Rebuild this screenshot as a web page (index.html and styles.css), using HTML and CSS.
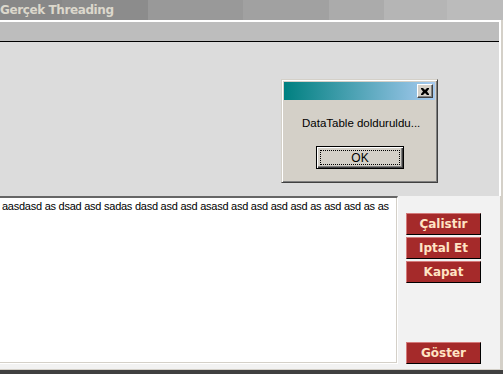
FILE: index.html
```html
<!DOCTYPE html>
<html>
<head>
<meta charset="utf-8">
<link rel="stylesheet" href="styles.css">
</head>
<body>
<div class="window">
  <div class="titlebar"><span class="title">Gerçek Threading</span></div>
  <div class="frame">
    <div class="band"></div>
    <div class="main"></div>
  </div>
  <div class="bottom">
    <div class="bottom-inner">
      <div class="textbox">aasdasd as dsad asd sadas dasd asd asd asasd asd asd asd asd as asd asd as as</div>
      <div class="side">
        <div class="btn">Çalistir</div>
        <div class="btn">Iptal Et</div>
        <div class="btn">Kapat</div>
        <div class="btn btn-last">Göster</div>
      </div>
    </div>
  </div>
  <div class="dialog">
    <div class="dlg-title">
      <div class="dlg-close">
        <svg width="8" height="7" viewBox="0 0 8 7"><path d="M0 0h2l2 2 2-2h2v1L6 3.5 8 6v1H6L4 5 2 7H0V6l2-2.5L0 1z" fill="#000"/></svg>
      </div>
    </div>
    <div class="dlg-msg">DataTable dolduruldu...</div>
    <div class="dlg-ok"><span class="focus">OK</span></div>
  </div>
</div>
</body>
</html>
```
FILE: styles.css
```css
html, body {
  margin: 0;
  padding: 0;
}
body {
  background: #d4d0c8;
  width: 503px;
  height: 374px;
  overflow: hidden;
}
.window {
  position: relative;
  width: 503px;
  height: 374px;
}
.titlebar {
  height: 20px;
  background: linear-gradient(to right,
    #888888 0 62px, #8c8c8c 62px 148px, #999999 148px 243px,
    #a1a1a1 243px 329px, #ababab 329px 384px, #b5b5b5 384px 447px,
    #bbbbbb 447px 503px);
  display: flex;
  align-items: center;
}
.title {
  font-family: "DejaVu Sans", sans-serif;
  font-weight: bold;
  font-size: 12px;
  color: #dcd8cc;
  letter-spacing: -0.4px;
  line-height: 20px;
}
.frame {
  width: 501px;
  box-sizing: border-box;
  border-top: 2px solid #ffffff;
  border-right: 2px solid #ffffff;
}
.band {
  height: 19px;
  background: #bdbdbd;
  border-bottom: 1px solid #000;
}
.main {
  height: 154px;
  background: #dcdcdc;
}
.bottom {
  height: 178px;
  box-sizing: border-box;
  border-bottom: 4px solid #404040;
}
.bottom-inner {
  height: 174px;
  box-sizing: border-box;
  width: 501px;
  border-bottom: 1px solid #d4d0c8;
  border-right: 1px solid #d4d0c8;
  background: #f2f2f2;
  display: flex;
}
.textbox {
  width: 398px;
  height: 168px;
  box-sizing: border-box;
  background: #fff;
  border-top: 2px solid #666666;
  border-right: 1px solid #fff;
  border-bottom: 1px solid #fff;
  box-shadow: inset -1px -1px #d4d0c8;
  padding: 2px 2px;
  font-family: "Liberation Sans", Arial, sans-serif;
  font-size: 11px;
  letter-spacing: -0.25px;
  line-height: 13px;
  color: #000;
  white-space: nowrap;
  overflow: hidden;
}
.side {
  flex: 1;
  display: flex;
  flex-direction: column;
  gap: 2px;
  padding: 17px 0 5px 8px;
}
.btn {
  width: 75px;
  height: 22px;
  box-sizing: border-box;
  background: #a52a2a;
  border: 1px solid;
  border-color: #d47a7a #000 #000 #d47a7a;
  color: #ffe4c4;
  font-family: "DejaVu Sans", sans-serif;
  font-weight: bold;
  font-size: 12px;
  display: flex;
  align-items: center;
  justify-content: center;
}
.btn-last {
  margin-top: auto;
}
.dialog {
  position: absolute;
  left: 281px;
  top: 79px;
  width: 157px;
  height: 104px;
  box-sizing: border-box;
  background: #d4d0c8;
  border: 1px solid;
  border-color: #d4d0c8 #404040 #404040 #d4d0c8;
  box-shadow: inset 1px 1px #fff, inset -1px -1px #808080;
  padding: 2px;
  font-family: "Liberation Sans", Arial, sans-serif;
  font-size: 11px;
}
.dlg-title {
  height: 18px;
  background: linear-gradient(to right, #008080, #a6caf0);
  display: flex;
  justify-content: flex-end;
  align-items: center;
  padding-right: 2px;
}
.dlg-close {
  width: 16px;
  height: 14px;
  box-sizing: border-box;
  background: #d4d0c8;
  border: 1px solid;
  border-color: #fff #404040 #404040 #fff;
  box-shadow: inset -1px -1px #808080;
  display: flex;
  align-items: center;
  justify-content: center;
}
.dlg-msg {
  margin-top: 17px;
  padding-left: 18px;
  line-height: 13px;
  font-size: 11.5px;
  color: #000;
}
.dlg-ok {
  margin-top: 16px;
  margin-left: 32px;
  width: 88px;
  height: 23px;
  box-sizing: border-box;
  border: 1px solid #000;
  box-shadow: inset 1px 1px #fff, inset -1px -1px #404040, inset -2px -2px #808080;
  padding: 3px;
  display: flex;
}
.focus {
  flex: 1;
  border: 1px dotted #000;
  display: flex;
  align-items: center;
  justify-content: center;
  color: #000;
  font-size: 12px;
}
```
